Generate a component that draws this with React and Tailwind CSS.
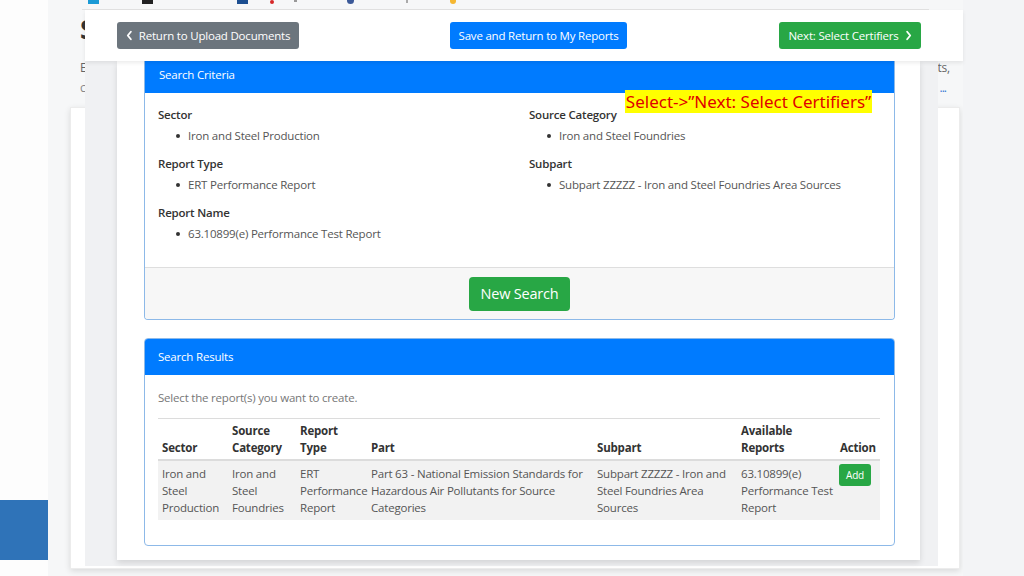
import React from "react";

const font = { fontFamily: '"Open Sans", "Noto Sans", sans-serif', letterSpacing: "-0.2px" };

function Chevron({ dir = "left", className = "" }) {
  return (
    <svg viewBox="0 0 10 16" className={className} fill="none" stroke="currentColor" strokeWidth="2.6" strokeLinecap="round" strokeLinejoin="round">
      {dir === "left" ? <path d="M7 2.5 2.5 8 7 13.5" /> : <path d="M3 2.5 7.5 8 3 13.5" />}
    </svg>
  );
}

function Group({ label, item }) {
  return (
    <div className="mb-[7px]">
      <div className="h-[21px] leading-[21px] text-[11.5px] font-semibold text-[#333]">{label}</div>
      <ul className="h-[21px] leading-[21px] text-[11.5px] text-[#555] pl-[18px]">
        <li className="flex items-center">
          <span className="w-[4px] h-[4px] rounded-full bg-[#333] mr-[8px]" />
          {item}
        </li>
      </ul>
    </div>
  );
}

const cols = [
  { w: 70, h: ["", "Sector"], c: ["Iron and", "Steel", "Production"] },
  { w: 68, h: ["Source", "Category"], c: ["Iron and", "Steel", "Foundries"] },
  { w: 71, h: ["Report", "Type"], c: ["ERT", "Performance", "Report"] },
  { w: 226, h: ["", "Part"], c: ["Part 63 - National Emission Standards for", "Hazardous Air Pollutants for Source", "Categories"] },
  { w: 144, h: ["", "Subpart"], c: ["Subpart ZZZZZ - Iron and", "Steel Foundries Area", "Sources"] },
  { w: 99, h: ["Available", "Reports"], c: ["63.10899(e)", "Performance Test", "Report"] },
];

export default function App() {
  return (
    <div className="relative w-[1024px] h-[576px] overflow-hidden bg-[#fbfbfc]" style={font}>
      {/* background page */}
      <div className="flex h-full">
        <div className="w-[48px] h-full bg-[#fdfdfd] flex flex-col justify-end pb-[16px]">
          <div className="h-[60px] bg-[#2f73b8]" />
        </div>
        <div className="w-[915px] h-full bg-[#f6f7f8] flex flex-col">
          <div className="h-[10px] mx-[34px] border-b border-[#e2e2e2] flex items-start relative">
            <div className="ml-[6px] w-[11px] h-[4px] bg-[#1a9ad6]" />
            <div className="ml-[43px] w-[11px] h-[4px] bg-[#222]" />
            <div className="ml-[84px] w-[11px] h-[4px] bg-[#1d4f91]" />
            <div className="ml-[22px] w-[4px] h-[4px] rounded-full bg-[#d62828]" />
            <div className="ml-[20px] w-[3px] h-[2px] bg-[#999]" />
            <div className="ml-[50px] w-[7px] h-[4px] rounded-b-full bg-[#3b5998]" />
            <div className="ml-[52px] w-[2px] h-[3px] bg-[#aaa]" />
            <div className="ml-[42px] w-[6px] h-[4px] rounded-b-full bg-[#f5b731]" />
          </div>
          <div className="pl-[32px] pr-[13px]">
            <div className="text-[26px] font-bold text-[#333] leading-[30px] mt-[4px]">S</div>
            <div className="flex justify-between text-[12px] text-[#666] mt-[14px] leading-[20px]">
              <span>E</span>
              <span>ts,</span>
            </div>
            <div className="flex justify-between text-[12px] leading-[20px]">
              <span className="text-[#888]">c</span>
              <span className="text-[#3a7bd5] tracking-[-1px] pr-[4px]">...</span>
            </div>
            <div className="mt-[9px] mx-[-10px] h-[462px] bg-white border border-[#ececec] shadow-[0_2px_6px_rgba(0,0,0,0.12)]" />
          </div>
        </div>
        <div className="flex-1 h-full bg-[#f3f4f6]" />
      </div>

      {/* modal overlay */}
      <div className="absolute left-[85px] top-[10px] w-[878px]">
        <div className="h-[51px] bg-white flex items-center pl-[32px] pr-[42px] shadow-[0_2px_4px_rgba(0,0,0,0.08)] relative z-10">
          <button className="h-[27px] w-[182px] rounded-[3px] bg-[#6c757d] text-white text-[11.5px] flex items-center justify-center gap-[6px]">
            <Chevron className="w-[7px] h-[11px]" />
            <span>Return to Upload Documents</span>
          </button>
          <button className="ml-[151px] h-[27px] w-[177px] rounded-[3px] bg-[#007bff] text-white text-[11.5px] flex items-center justify-center">
            Save and Return to My Reports
          </button>
          <button className="ml-auto h-[27px] w-[142px] rounded-[3px] bg-[#28a745] text-white text-[11.5px] flex items-center justify-center gap-[6px]">
            <span>Next: Select Certifiers</span>
            <Chevron dir="right" className="w-[7px] h-[11px]" />
          </button>
        </div>
        <div className="w-[853px] h-[505px] bg-[#f0f1f3] pl-[32px]">
          <div className="w-[803px] h-[499px] bg-white pl-[27px] shadow-[0_3px_6px_rgba(0,0,0,0.12)]">
            {/* Search Criteria card */}
            <div className="w-[751px] border border-[#8db9e8] border-t-0 rounded-b-[4px] overflow-hidden">
              <div className="h-[32px] bg-[#007bff] text-white text-[11.5px] flex items-center pl-[14px] pb-[4px]">Search Criteria</div>
              <div className="h-[174px] pt-[11px] pl-[13px] grid grid-cols-[371px_1fr]">
                <div>
                  <Group label="Sector" item="Iron and Steel Production" />
                  <Group label="Report Type" item="ERT Performance Report" />
                  <Group label="Report Name" item="63.10899(e) Performance Test Report" />
                </div>
                <div>
                  <Group label="Source Category" item="Iron and Steel Foundries" />
                  <Group label="Subpart" item="Subpart ZZZZZ - Iron and Steel Foundries Area Sources" />
                </div>
              </div>
              <div className="h-[52px] bg-[#f7f7f7] border-t border-[#dedede] flex items-center justify-center">
                <button className="h-[34px] w-[101px] rounded-[4px] bg-[#28a745] text-white text-[14.5px]">New Search</button>
              </div>
            </div>

            {/* Search Results card */}
            <div className="mt-[18px] w-[751px] h-[208px] border border-[#8db9e8] rounded-[4px] overflow-hidden">
              <div className="h-[36px] bg-[#007bff] text-white text-[11.5px] flex items-center pl-[13px]">Search Results</div>
              <div className="pl-[13px] pr-[14px]">
                <div className="pt-[13px] pb-[10px] text-[11.5px] leading-[20px] text-[#777]">Select the report(s) you want to create.</div>
                <table className="w-[722px] table-fixed border-collapse text-[11.5px] border-t border-[#dcdcdc]">
                  <colgroup>
                    {cols.map((c, i) => (
                      <col key={i} style={{ width: c.w }} />
                    ))}
                    <col style={{ width: 44 }} />
                  </colgroup>
                  <thead>
                    <tr className="border-b-2 border-[#dcdcdc]">
                      {cols.map((c, i) => (
                        <th key={i} className="text-left font-bold text-[#333] align-bottom px-[4px] pt-[3px] pb-[3px] leading-[17px]">
                          <div className="h-[17px]">{c.h[0]}</div>
                          <div className="h-[17px]">{c.h[1]}</div>
                        </th>
                      ))}
                      <th className="text-left font-bold text-[#333] align-bottom px-[4px] pb-[3px] leading-[17px]">Action</th>
                    </tr>
                  </thead>
                  <tbody>
                    <tr className="bg-[#f2f2f2]">
                      {cols.map((c, i) => (
                        <td key={i} className="align-top px-[4px] pt-[4px] pb-[4px] leading-[17px] text-[#555] whitespace-nowrap">
                          {c.c.map((l, j) => (
                            <div key={j}>{l}</div>
                          ))}
                        </td>
                      ))}
                      <td className="align-top px-[3px] pt-[3px]">
                        <button className="h-[22px] w-[32px] rounded-[3px] bg-[#28a745] text-white text-[10px]">Add</button>
                      </td>
                    </tr>
                  </tbody>
                </table>
              </div>
            </div>
          </div>
        </div>
      </div>

      {/* annotations */}
      <div className="absolute left-[625px] top-[90px] h-[23px] w-[247px] bg-[#ffff00] text-[#e00000] text-[17px] leading-[23px] whitespace-nowrap flex items-center justify-center tracking-normal" style={{ fontFamily: '"Noto Sans", "Open Sans", sans-serif' }}>
        Select-&gt;”Next: Select Certifiers”
      </div>
      <svg className="absolute left-[766px] top-[13px]" width="174" height="48" viewBox="0 0 174 48">
        <ellipse cx="87" cy="24" rx="85" ry="22" fill="none" stroke="#d40f0f" strokeWidth="2" />
      </svg>
    </div>
  );
}
